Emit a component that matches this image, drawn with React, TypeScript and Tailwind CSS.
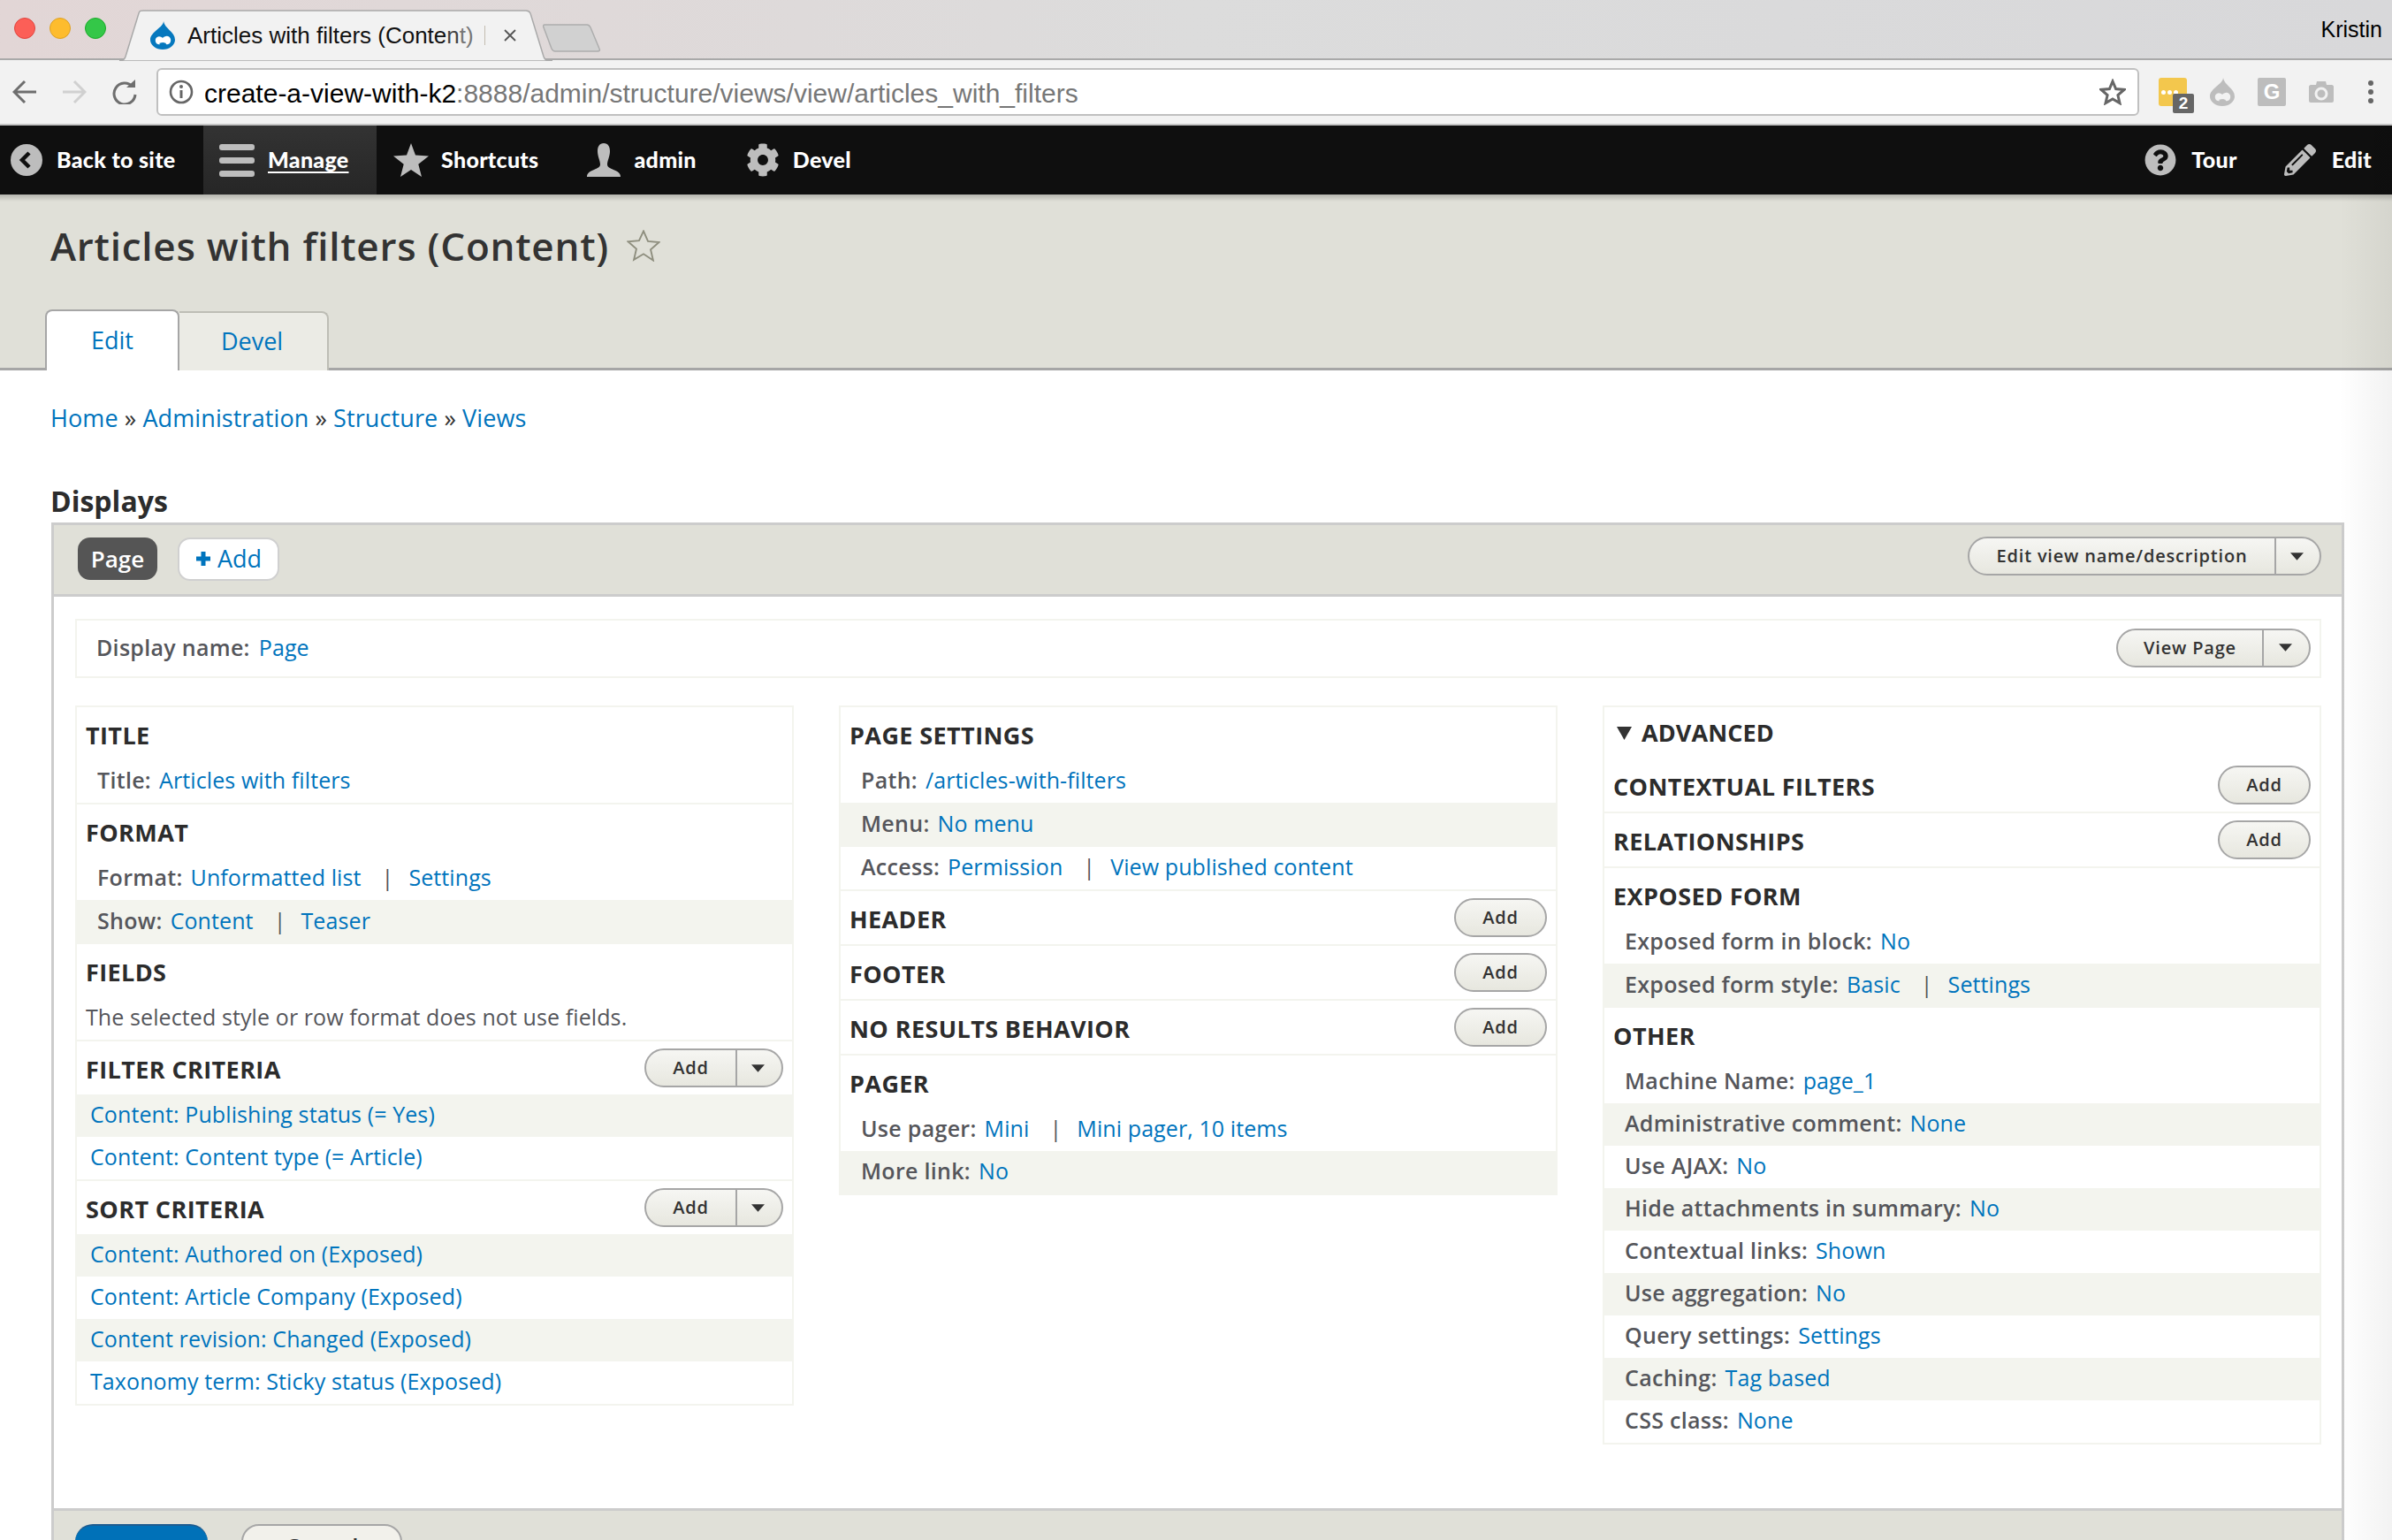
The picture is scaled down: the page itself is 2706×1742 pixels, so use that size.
import React from "react";
import { FaCog, FaQuestionCircle, FaPencilAlt } from "react-icons/fa";

const link = "text-[#0074bd]";

function Drop({ color, face, className }: { color: string; face: string; className: string }) {
  return (
    <svg viewBox="0 0 28 32" className={className}>
      <path d="M15 0c0 7-15 12-15 21a14 11 0 0 0 28 0C28 12 16 8 15 0z" fill={color} />
      <path d="M6 20c2-4 6-3 8-1 2-2 7-4 9 1 1 4-2 7-5 6-2-2-5-2-7 0-3 1-6-2-5-6z" fill={face} />
      <path d="M10 25c2-1 6-1 8 0-1 2-6 2-8 0z" fill={color} />
    </svg>
  );
}

function Caret() {
  return (
    <svg viewBox="0 0 16 9" className="w-[15px] h-[9px]">
      <path d="M0 0h16L8 9z" fill="#333333" />
    </svg>
  );
}

function PlainButton({ label }: { label: string }) {
  return (
    <div className="w-[105px] h-[44px] rounded-full border-2 border-[#a6a6a6] bg-linear-to-b from-[#f6f6f3] to-[#e7e7df] flex items-center justify-center text-[20px] font-semibold tracking-[0.8px] text-[#333333]">
      {label}
    </div>
  );
}

function SplitButton({ label, main, drop }: { label: string; main: string; drop: string }) {
  return (
    <div className="h-[44px] flex rounded-full border-2 border-[#a6a6a6] bg-linear-to-b from-[#f6f6f3] to-[#e7e7df] text-[20px] font-semibold tracking-[0.8px] text-[#333333]">
      <div className={`${main} flex items-center justify-center border-r-2 border-[#a6a6a6]`}>{label}</div>
      <div className={`${drop} flex items-center justify-center pr-[3px]`}>
        <Caret />
      </div>
    </div>
  );
}

function Heading({ children, button }: { children: React.ReactNode; button?: React.ReactNode }) {
  return (
    <div className="h-[60px] pl-[10px] pr-[10px] flex items-center justify-between">
      <div className="text-[27px] font-bold tracking-[0.4px] text-[#2c2c2c] mt-[4px]">{children}</div>
      {button}
    </div>
  );
}

function Row({
  label,
  band,
  tall,
  children,
}: {
  label: string;
  band?: boolean;
  tall?: boolean;
  children: React.ReactNode;
}) {
  return (
    <div className={`${tall ? "h-[50px]" : "h-[48px]"} pl-[23px] pb-[3px] flex items-center text-[25px] tracking-[0.1px] ${band ? "bg-[#f3f4ee]" : ""}`}>
      <span className="font-semibold tracking-[0.3px] text-[#55565b] mr-[9px]">{label}</span>
      {children}
    </div>
  );
}

function L({ children }: { children: React.ReactNode }) {
  return <span className={link}>{children}</span>;
}

function Sep() {
  return <span className="text-[#55565b] ml-[23px] mr-[17px]">|</span>;
}

function LinkRow({ band, children }: { band?: boolean; children: React.ReactNode }) {
  return <div className={`h-[48px] pl-[15px] pb-[3px] flex items-center text-[25px] tracking-[0.1px] ${link} ${band ? "bg-[#f3f4ee]" : ""}`}>{children}</div>;
}

function Divider() {
  return <div className="h-[2px] bg-[#f3f4ee]" />;
}

export default function App() {
  return (
    <div className="relative w-[2706px] h-[1742px] overflow-hidden bg-white font-['Open_Sans',sans-serif]">
      {/* tab strip */}
      <div className="relative h-[68px] bg-linear-to-r from-[#e2d6d6] via-[#dcdcdc] to-[#d8d8da] border-b-2 border-[#a9a9a9] flex items-start font-['Liberation_Sans',sans-serif]">
        <div className="flex gap-[16px] pl-[16px] pt-[20px]">
          <div className="w-[24px] h-[24px] rounded-full bg-[#fc5f57] border border-[#e0443e]" />
          <div className="w-[24px] h-[24px] rounded-full bg-[#fdbc2e] border border-[#dea123]" />
          <div className="w-[24px] h-[24px] rounded-full bg-[#34c748] border border-[#1aab29]" />
        </div>
        <svg viewBox="0 0 490 58" className="absolute left-[135px] top-[11px] w-[490px] h-[58px]">
          <path d="M0 57h2c3 0 4-1 5-4L22 4c1-3 2-3 5-3h433c3 0 4 1 5 3l15 49c1 3 2 4 5 4h5v1H0z" fill="#f2f2f2" stroke="#a9a9a9" strokeWidth="1.5" />
        </svg>
        <svg viewBox="0 0 66 32" className="absolute left-[614px] top-[27px] w-[66px] h-[32px]">
          <path d="M2 1h48c2 0 3 1 4 3l10 24c1 2 0 3-2 3H14c-2 0-3-1-4-3L1 4c-1-2 0-3 1-3z" fill="#d1d1d1" stroke="#adadad" strokeWidth="1.5" />
        </svg>
        <div className="absolute left-[170px] top-[24px]">
          <Drop color="#0678be" face="#ffffff" className="w-[28px] h-[32px]" />
        </div>
        <div className="absolute left-[212px] top-[25px] text-[26px] leading-[30px] text-[#111111] whitespace-nowrap">
          Articles with filters (Conte<span className="text-[#444444]">n</span>
          <span className="text-[#777777]">t)</span>
        </div>
        <div className="absolute left-[548px] top-[29px] w-[1px] h-[22px] bg-[#c4bcb0]" />
        <svg viewBox="0 0 14 14" className="absolute left-[570px] top-[33px] w-[14px] h-[14px]">
          <path d="M1 1l12 12M13 1L1 13" stroke="#555555" strokeWidth="1.8" />
        </svg>
        <div className="absolute right-[11px] top-[18px] text-[25px] leading-[30px] text-black">Kristin</div>
      </div>

      {/* url toolbar */}
      <div className="h-[74px] bg-[#f2f2f2] border-b-2 border-[#c4c4c4] flex items-center font-['Liberation_Sans',sans-serif]">
        <svg viewBox="0 0 28 28" className="ml-[14px] w-[28px] h-[28px]">
          <path d="M27 14H3M14 2L2 14l12 12" fill="none" stroke="#6e6e6e" strokeWidth="3" />
        </svg>
        <svg viewBox="0 0 28 28" className="ml-[28px] w-[28px] h-[28px]">
          <path d="M1 14h24M14 2l12 12-12 12" fill="none" stroke="#d0d0d0" strokeWidth="3" />
        </svg>
        <svg viewBox="0 0 28 28" className="ml-[29px] w-[28px] h-[28px]">
          <path d="M23 8a12 12 0 1 0 3 9" fill="none" stroke="#6e6e6e" strokeWidth="3" />
          <path d="M16 9h10V0z" fill="#6e6e6e" />
        </svg>
        <div className="ml-[22px] w-[2243px] h-[54px] rounded-[6px] bg-white border-2 border-[#c0c0c0] flex items-center pl-[12px] pr-[12px]">
          <svg viewBox="0 0 28 28" className="w-[28px] h-[28px] shrink-0">
            <circle cx="14" cy="14" r="12" fill="none" stroke="#666666" strokeWidth="2.6" />
            <path d="M14 12v9" stroke="#666666" strokeWidth="3" />
            <circle cx="14" cy="8" r="2" fill="#666666" />
          </svg>
          <div className="ml-[12px] pt-[2px] text-[30px] text-[#777777] whitespace-nowrap flex-1">
            <span className="text-black">create-a-view-with-k2</span>:8888/admin/structure/views/view/articles_with_filters
          </div>
          <svg viewBox="0 0 30 30" className="w-[30px] h-[30px] shrink-0 mr-[1px]">
            <path d="M15 3l3.6 8.6 9.4.8-7.1 6.1 2.1 9.1L15 22.900l-8 4.700 2.100-9.100L2 12.400l9.400-.8z" fill="none" stroke="#666666" strokeWidth="3" />
          </svg>
        </div>
        <div className="relative ml-[22px] w-[32px] h-[32px] rounded-[3px] bg-[#f3c74d] flex items-center pl-[3px] gap-[2px]">
          <div className="w-[5px] h-[5px] rounded-full bg-white" />
          <div className="w-[5px] h-[5px] rounded-full bg-white" />
          <div className="w-[5px] h-[5px] rounded-full bg-white" />
          <div className="absolute left-[16px] top-[18px] w-[24px] h-[22px] rounded-[2px] bg-[#666666] text-white text-[19px] leading-[22px] font-bold text-center">2</div>
        </div>
        <Drop color="#bdbdbd" face="#f2f2f2" className="ml-[26px] w-[28px] h-[32px]" />
        <div className="ml-[26px] w-[32px] h-[32px] rounded-[2px] bg-[#bdbdbd] text-white text-[24px] leading-[32px] font-bold text-center">G</div>
        <svg viewBox="0 0 28 26" className="ml-[26px] w-[28px] h-[26px]">
          <path d="M2 5h6l1-4h10l1 4h6c1 0 2 1 2 2v16c0 1-1 2-2 2H2c-1 0-2-1-2-2V7c0-1 1-2 2-2z" fill="#bdbdbd" />
          <circle cx="14" cy="15" r="6" fill="none" stroke="#f2f2f2" strokeWidth="3" />
        </svg>
        <div className="ml-[39px] flex flex-col gap-[4px]">
          <div className="w-[6px] h-[6px] rounded-full bg-[#666666]" />
          <div className="w-[6px] h-[6px] rounded-full bg-[#666666]" />
          <div className="w-[6px] h-[6px] rounded-full bg-[#666666]" />
        </div>
      </div>

      {/* admin toolbar */}
      <div className="relative h-[78px] bg-[#0f0f0f] flex items-center text-white text-[25px] tracking-[0.3px] font-black font-['Lato',sans-serif]">
        <div className="w-[230px] h-full flex items-center">
          <svg viewBox="0 0 36 36" className="ml-[12px] w-[36px] h-[36px]">
            <circle cx="18" cy="18" r="18" fill="#bdbdbd" />
            <path d="M21 10l-8 8 8 8" fill="none" stroke="#0f0f0f" strokeWidth="4.5" />
          </svg>
          <span className="ml-[16px]">Back to site</span>
        </div>
        <div className="w-[196px] h-full bg-linear-to-b from-[#333333] to-[#262626] flex items-center">
          <div className="ml-[18px] w-[40px] flex flex-col gap-[8px]">
            <div className="h-[7px] rounded-[3px] bg-[#bdbdbd]" />
            <div className="h-[7px] rounded-[3px] bg-[#bdbdbd]" />
            <div className="h-[7px] rounded-[3px] bg-[#bdbdbd]" />
          </div>
          <span className="ml-[15px] underline underline-offset-[4px]">Manage</span>
        </div>
        <svg viewBox="0 0 40 38" className="ml-[19px] w-[40px] h-[38px]">
          <path d="M20 0l5 13.5 15 1-11.700 9.300L32 38 20 30 8 38l3.700-14.200L0 14.500l15-1z" fill="#bdbdbd" />
        </svg>
        <span className="ml-[14px]">Shortcuts</span>
        <svg viewBox="0 0 38 38" className="ml-[55px] w-[38px] h-[38px]">
          <path d="M19 0c5 0 7 4 7 9 0 6-3 11-3 15 0 3 3 4 7 6 5 2 8 4 8 8H0c0-4 3-6 8-8 4-2 7-3 7-6 0-4-3-9-3-15 0-5 2-9 7-9z" fill="#bdbdbd" />
        </svg>
        <span className="ml-[15px]">admin</span>
        <FaCog className="ml-[56px] w-[38px] h-[38px] text-[#bdbdbd]" />
        <span className="ml-[15px]">Devel</span>
        <div className="flex-1" />
        <FaQuestionCircle className="w-[36px] h-[36px] text-[#bdbdbd]" />
        <span className="ml-[17px]">Tour</span>
        <FaPencilAlt className="ml-[53px] w-[36px] h-[36px] text-[#bdbdbd]" />
        <span className="ml-[18px] mr-[23px]">Edit</span>
      </div>

      {/* page title */}
      <div className="relative h-[199px] bg-[#e0e0d8] border-b-[3px] border-[#a6a6a6]">
        <div className="absolute left-0 right-0 top-0 h-[8px] bg-linear-to-b from-black/20 to-transparent" />
        <div className="pl-[57px] flex items-center h-[116px]">
          <h1 className="text-[44px] font-semibold text-[#333333] tracking-[0.75px] whitespace-nowrap">Articles with filters (Content)</h1>
          <svg viewBox="0 0 40 38" className="ml-[20px] w-[38px] h-[36px]">
            <path d="M20 1.500l5.300 12.100 13.200 1.200-10 8.700 3 12.900L20 28.800 8.500 35.600l3-12.900-10-8.700 13.200-1.200z" fill="none" stroke="#8e8e7e" strokeWidth="2" />
          </svg>
        </div>
        <div className="absolute left-[51px] bottom-[-3px] flex items-end text-[27px]">
          <div className="w-[152px] h-[69px] bg-white border-2 border-b-0 border-[#a6a6a6] rounded-t-[8px] flex items-center justify-center text-[#0074bd]">Edit</div>
          <div className="w-[169px] h-[67px] pr-[3px] bg-[#ebebe5] border-2 border-l-0 border-b-0 border-[#bdbdb5] rounded-tr-[8px] flex items-center justify-center text-[#0074bd]">Devel</div>
        </div>
      </div>

      {/* content */}
      <div className="pl-[58px] pr-[54px]">
        <div className="h-[110px] pt-[36px] -ml-[1px] text-[27px] leading-[36px] tracking-[0.1px] text-[#333333]">
          <L>Home</L> » <L>Administration</L> » <L>Structure</L> » <L>Views</L>
        </div>
        <div className="h-[62px] pt-[18px] -ml-[1px] text-[32px] leading-[40px] font-bold text-[#2c2c2c]">Displays</div>

        <div className="border-x-[3px] border-[#cccccc]">
          <div className="h-[84px] bg-[#e0e0d8] border-y-[3px] border-[#cccccc] pl-[27px] pr-[23px] flex items-center">
            <div className="w-[90px] h-[48px] mb-[2px] rounded-[14px] bg-[#555555] text-white text-[26px] font-semibold flex items-center justify-center">Page</div>
            <div className="ml-[23px] mb-[2px] w-[115px] h-[49px] rounded-[14px] bg-white border-2 border-[#d0d0d0] text-[#0074bd] text-[27px] flex items-center justify-center gap-[7px]">
              <svg viewBox="0 0 18 18" className="w-[18px] h-[18px]">
                <path d="M9 1v16M1 9h16" stroke="#0074bd" strokeWidth="5" />
              </svg>
              Add
            </div>
            <div className="flex-1" />
            <div className="mb-[8px]">
              <SplitButton label="Edit view name/description" main="w-[347px]" drop="w-[49px]" />
            </div>
          </div>

          <div className="h-[1031px] pl-[24px] pr-[23px] pt-[25px]">
            <div className="h-[67px] border-2 border-[#f3f4ee] pl-[22px] pr-[10px] flex items-center justify-between text-[25px] tracking-[0.1px]">
              <div className="pb-[2px]">
                <span className="font-semibold tracking-[0.3px] text-[#55565b] mr-[10px]">Display name:</span>
                <L>Page</L>
              </div>
              <div className="mb-[2px]">
                <SplitButton label="View Page" main="w-[165px]" drop="w-[51px]" />
              </div>
            </div>

            <div className="mt-[31px] grid grid-cols-3 gap-[51px] items-start">
              {/* left */}
              <div className="border-2 border-[#f3f4ee]">
                <Heading>TITLE</Heading>
                <Row label="Title:"><L>Articles with filters</L></Row>
                <Divider />
                <Heading>FORMAT</Heading>
                <Row label="Format:"><L>Unformatted list</L><Sep /><L>Settings</L></Row>
                <Row label="Show:" band tall><L>Content</L><Sep /><L>Teaser</L></Row>
                <Heading>FIELDS</Heading>
                <div className="h-[48px] pl-[10px] pb-[3px] flex items-center text-[25px] tracking-[0.1px] text-[#55565b]">The selected style or row format does not use fields.</div>
                <Divider />
                <Heading button={<SplitButton label="Add" main="w-[103px]" drop="w-[50px]" />}>FILTER CRITERIA</Heading>
                <LinkRow band>Content: Publishing status (= Yes)</LinkRow>
                <LinkRow>Content: Content type (= Article)</LinkRow>
                <Divider />
                <Heading button={<SplitButton label="Add" main="w-[103px]" drop="w-[50px]" />}>SORT CRITERIA</Heading>
                <LinkRow band>Content: Authored on (Exposed)</LinkRow>
                <LinkRow>Content: Article Company (Exposed)</LinkRow>
                <LinkRow band>Content revision: Changed (Exposed)</LinkRow>
                <LinkRow>Taxonomy term: Sticky status (Exposed)</LinkRow>
              </div>

              {/* middle */}
              <div className="border-2 border-[#f3f4ee]">
                <Heading>PAGE SETTINGS</Heading>
                <Row label="Path:"><L>/articles-with-filters</L></Row>
                <Row label="Menu:" band tall><L>No menu</L></Row>
                <Row label="Access:"><L>Permission</L><Sep /><L>View published content</L></Row>
                <Divider />
                <Heading button={<PlainButton label="Add" />}>HEADER</Heading>
                <Divider />
                <Heading button={<PlainButton label="Add" />}>FOOTER</Heading>
                <Divider />
                <Heading button={<PlainButton label="Add" />}>NO RESULTS BEHAVIOR</Heading>
                <Divider />
                <Heading>PAGER</Heading>
                <Row label="Use pager:"><L>Mini</L><Sep /><L>Mini pager, 10 items</L></Row>
                <Row label="More link:" band><L>No</L></Row>
              </div>

              {/* right */}
              <div className="border-2 border-[#f3f4ee]">
                <div className="h-[58px] pl-[14px] flex items-center text-[27px] font-bold tracking-[0.1px] text-[#2c2c2c]">
                  <svg viewBox="0 0 16 14" className="w-[17px] h-[15px] mr-[11px]">
                    <path d="M0 0h16L8 14z" fill="#333333" />
                  </svg>
                  ADVANCED
                </div>
                <Heading button={<PlainButton label="Add" />}>CONTEXTUAL FILTERS</Heading>
                <Divider />
                <Heading button={<PlainButton label="Add" />}>RELATIONSHIPS</Heading>
                <Divider />
                <Heading>EXPOSED FORM</Heading>
                <Row label="Exposed form in block:"><L>No</L></Row>
                <Row label="Exposed form style:" band tall><L>Basic</L><Sep /><L>Settings</L></Row>
                <Heading>OTHER</Heading>
                <Row label="Machine Name:"><L>page_1</L></Row>
                <Row label="Administrative comment:" band><L>None</L></Row>
                <Row label="Use AJAX:"><L>No</L></Row>
                <Row label="Hide attachments in summary:" band><L>No</L></Row>
                <Row label="Contextual links:"><L>Shown</L></Row>
                <Row label="Use aggregation:" band><L>No</L></Row>
                <Row label="Query settings:"><L>Settings</L></Row>
                <Row label="Caching:" band><L>Tag based</L></Row>
                <Row label="CSS class:"><L>None</L></Row>
              </div>
            </div>
          </div>

          <div className="h-[60px] bg-[#e0e0d8] border-t-[3px] border-[#cccccc] pl-[24px] pt-[15px] flex items-start gap-[38px]">
            <div className="w-[150px] h-[50px] rounded-[20px] bg-[#0071b8] border-t-2 border-[#1e5c90] text-white text-[26px] font-semibold flex items-center justify-center shrink-0">Save</div>
            <div className="w-[182px] h-[50px] rounded-[20px] bg-[#f2f1eb] border-2 border-[#a6a6a6] text-[#333333] text-[26px] font-semibold flex items-center justify-center shrink-0">Cancel</div>
          </div>
        </div>
      </div>

      {/* right-edge shade over everything below the browser chrome */}
      <div className="absolute right-0 top-[142px] bottom-0 w-[60px] bg-linear-to-r from-transparent to-black/5 pointer-events-none" />
    </div>
  );
}
